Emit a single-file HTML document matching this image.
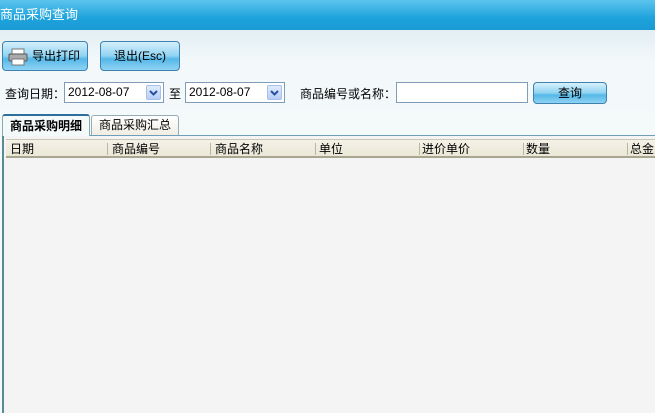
<!DOCTYPE html><html><head><style>
*{margin:0;padding:0;box-sizing:border-box}
body{width:655px;height:413px;overflow:hidden;background:#f4f9fa;font-family:"Liberation Sans","Noto Sans CJK SC",sans-serif;font-size:12px;color:#000;position:relative}
.abs{position:absolute}
.title{left:0;top:0;width:655px;height:30px;background:linear-gradient(#5cc4ee,#1ea3dc 60%,#1a9ad4);color:#fff;font-size:13px;line-height:30px;padding-left:0}
.top2{left:0;top:30px;width:655px;height:80px;background:linear-gradient(#e2eef3,#f3f9fb 40%,#f3f9fb)}
.btn{border:1px solid #3f82b0;border-radius:4px;background:linear-gradient(#d6f0fb,#8fd3f2 50%,#55b8e8 60%,#8fd3f4);height:30px;font-size:12px;line-height:28px;text-align:center}
.inp{background:#fff;border:1px solid #7f9db9;height:21px;line-height:19px;padding-left:3px}
.dd{position:absolute;right:2px;top:2px;width:15px;height:15px;background:linear-gradient(#e0ecfd,#b5cdf6);border:1px solid #a9bfe8;border-radius:2px}
.grid{left:2px;top:135px;width:653px;height:278px;border-left:2px solid #5a8a96;border-top:1px solid #6d9fb8;background:#f4f4f4}
.hdr{position:absolute;left:2px;top:3px;width:651px;height:19px;background:linear-gradient(#f4f2e8,#ebe8d7);border-bottom:2px solid #a8a691;border-top:1px solid #c9c6b5}
.hdr span{position:absolute;top:1px;line-height:16px}
.sep{position:absolute;top:3px;width:1px;height:12px;background:#b9b6a3}
</style></head><body>
<div class="abs title">商品采购查询</div>
<div class="abs top2"></div>
<div class="abs btn" style="left:2px;top:41px;width:86px;padding-left:22px">导出打印
<svg class="abs" style="left:5px;top:6px" width="20" height="18"><rect x="4" y="1" width="12" height="5" fill="#fff" stroke="#777"/><rect x="1" y="6" width="18" height="7" rx="1" fill="#aaa" stroke="#555"/><rect x="4" y="11" width="12" height="6" fill="#fff" stroke="#777"/></svg></div>
<div class="abs btn" style="left:100px;top:41px;width:80px">退出(Esc)</div>
<div class="abs" style="left:5px;top:85px">查询日期：</div>
<div class="abs inp" style="left:64px;top:82px;width:100px">2012-08-07<div class="dd"><svg width="13" height="13" style="display:block"><path d="M3 5l3.5 3.5L10 5" stroke="#2b4f9e" stroke-width="2" fill="none"/></svg></div></div>
<div class="abs" style="left:169px;top:85px">至</div>
<div class="abs inp" style="left:185px;top:82px;width:100px">2012-08-07<div class="dd"><svg width="13" height="13" style="display:block"><path d="M3 5l3.5 3.5L10 5" stroke="#2b4f9e" stroke-width="2" fill="none"/></svg></div></div>
<div class="abs" style="left:300px;top:85px">商品编号或名称：</div>
<div class="abs inp" style="left:396px;top:82px;width:132px"></div>
<div class="abs btn" style="left:533px;top:82px;width:74px;height:22px;line-height:20px">查询</div>
<div class="abs" style="left:2px;top:114px;width:88px;height:22px;border:1px solid #8aa;border-top:2px solid #2f6fa0;border-bottom:none;background:#f4f9fa;font-weight:bold;text-align:center;line-height:20px;z-index:2;border-radius:3px 3px 0 0">商品采购明细</div>
<div class="abs" style="left:91px;top:115px;width:88px;height:20px;border:1px solid #9ab;border-bottom:none;background:linear-gradient(#fff,#f0ede4);text-align:center;line-height:19px;border-radius:3px 3px 0 0">商品采购汇总</div>
<div class="abs grid"><div class="hdr">
<span style="left:4px">日期</span><div class="sep" style="left:101px"></div>
<span style="left:106px">商品编号</span><div class="sep" style="left:204px"></div>
<span style="left:209px">商品名称</span><div class="sep" style="left:309px"></div>
<span style="left:313px">单位</span><div class="sep" style="left:413px"></div>
<span style="left:416px">进价单价</span><div class="sep" style="left:517px"></div>
<span style="left:520px">数量</span><div class="sep" style="left:621px"></div>
<span style="left:624px">总金</span></div></div>
</body></html>
